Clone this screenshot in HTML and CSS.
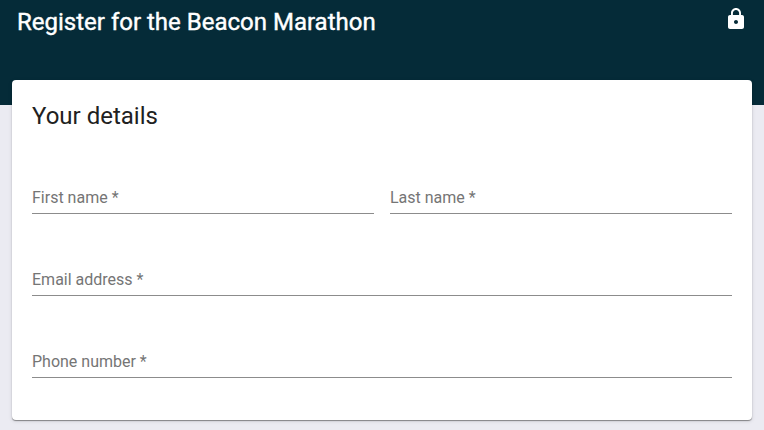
FILE: index.html
```html
<!DOCTYPE html>
<html lang="en">
<head>
<meta charset="utf-8">
<meta name="viewport" content="width=device-width, initial-scale=1">
<title>Register for the Beacon Marathon</title>
<link rel="stylesheet" href="styles.css">
</head>
<body>
<header class="banner">
  <h1 class="banner-title">Register for the Beacon Marathon</h1>
  <svg class="lock" viewBox="0 0 24 24" role="img" aria-label="Secure"><path d="M18 8h-1V6c0-2.760-2.240-5-5-5S7 3.240 7 6v2H6c-1.100 0-2 .9-2 2v10c0 1.100.9 2 2 2h12c1.100 0 2-.9 2-2V10c0-1.100-.9-2-2-2zm-6 9c-1.100 0-2-.9-2-2s.9-2 2-2 2 .9 2 2-.9 2-2 2zm3.100-9H8.900V6c0-1.710 1.390-3.100 3.100-3.100s3.100 1.390 3.100 3.100v2z"/></svg>
</header>
<main class="card">
  <h2 class="card-title">Your details</h2>
  <form class="fields">
    <div class="field">
      <input class="input" id="first" type="text" placeholder=" " required>
      <label class="label" for="first">First name *</label>
    </div>
    <div class="field">
      <input class="input" id="last" type="text" placeholder=" " required>
      <label class="label" for="last">Last name *</label>
    </div>
    <div class="field wide">
      <input class="input" id="email" type="email" placeholder=" " required>
      <label class="label" for="email">Email address *</label>
    </div>
    <div class="field wide">
      <input class="input" id="phone" type="tel" placeholder=" " required>
      <label class="label" for="phone">Phone number *</label>
    </div>
  </form>
</main>
</body>
</html>
```

FILE: styles.css
```css
* { box-sizing: border-box; }

body {
  margin: 0;
  background: #ebebf2;
  color: #212121;
  font-family: Roboto, sans-serif;
}

.banner {
  display: flex;
  justify-content: space-between;
  align-items: flex-start;
  padding: 7px 16px 68px 17px;
  background: #052b38;
  color: #fff;
}

.banner-title,
.card-title {
  margin: 0;
  font-size: 24px;
  font-weight: 400;
}

.banner-title {
  line-height: 30px;
  -webkit-text-stroke: 0.4px currentColor;
}

.card-title { line-height: 28px; }

.lock {
  width: 24px;
  height: 24px;
  fill: currentColor;
}

.card {
  margin: -25px 12px 10px;
  padding: 22px 20px 42px;
  background: #fff;
  border-radius: 4px;
  box-shadow: 0 1px 1px rgba(0, 0, 0, 0.4), 0 1px 4px rgba(0, 0, 0, 0.12);
}

.fields {
  display: grid;
  grid-template-columns: 1fr 1fr;
  gap: 46px 16px;
  margin-top: 48px;
}

.field { position: relative; }
.wide { grid-column: 1 / -1; }

.input {
  display: block;
  width: 100%;
  height: 36px;
  padding: 4px 0;
  border: 0;
  border-bottom: 1px solid #8c8c8c;
  background: transparent;
  color: inherit;
  font: 16px/24px Roboto, sans-serif;
  outline: 0;
}

.input:focus { border-color: #052b38; }

.label {
  position: absolute;
  top: 8px;
  left: 0;
  color: #757575;
  font-size: 16px;
  line-height: 24px;
  pointer-events: none;
}

.input:focus + .label,
.input:not(:placeholder-shown) + .label {
  top: -12px;
  font-size: 12px;
}
```
